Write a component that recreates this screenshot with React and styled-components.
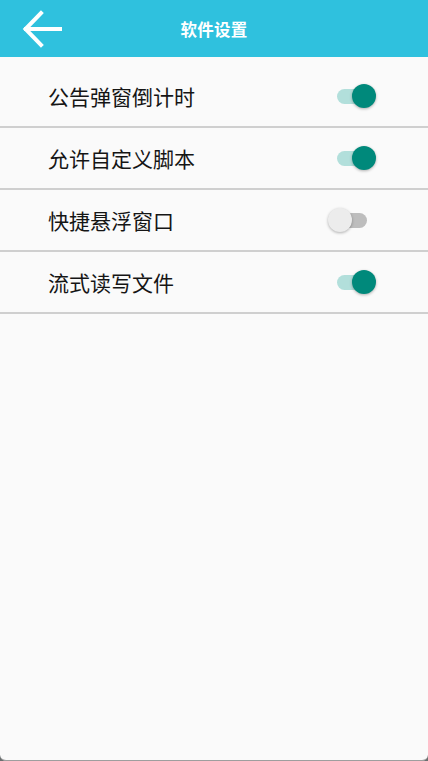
import { useState } from "react";
import styled, { createGlobalStyle } from "styled-components";

const GlobalStyle = createGlobalStyle`
  html, body {
    margin: 0;
    padding: 0;
    background: #6b6f70;
  }
  body {
    font-family: Roboto, "Noto Sans CJK SC", sans-serif;
  }
`;

const settingsList = [
  { key: "notice", label: "公告弹窗倒计时", on: true },
  { key: "script", label: "允许自定义脚本", on: true },
  { key: "float", label: "快捷悬浮窗口", on: false },
  { key: "stream", label: "流式读写文件", on: true },
];

const Switch = ({ checked, onToggle }) => (
  <SwitchWrapper checked={checked} onClick={onToggle}>
    <div className="track" />
    <div className="thumb" />
  </SwitchWrapper>
);

const App = () => {
  const [settings, setSettings] = useState(settingsList);

  const toggle = (key) => {
    setSettings(
      settings.map((item) =>
        item.key === key ? { ...item, on: !item.on } : item
      )
    );
  };

  return (
    <>
      <GlobalStyle />
      <Screen>
        <Header>
          <BackButton>
            <svg width="40" height="38" viewBox="0 0 40 38" fill="none">
              <path
                d="M38 19H4M19 3L3.5 19L19 35"
                stroke="#ffffff"
                strokeWidth="4"
                strokeLinecap="square"
              />
            </svg>
          </BackButton>
          <Title>软件设置</Title>
        </Header>
        <List>
          {settings.map((item) => (
            <Row key={item.key}>
              <Label>{item.label}</Label>
              <Switch checked={item.on} onToggle={() => toggle(item.key)} />
            </Row>
          ))}
        </List>
      </Screen>
    </>
  );
};
export default App;

const Screen = styled.div`
  width: 428px;
  height: 760px;
  background: #fafafa;
  border-bottom: 1px solid #9e9e9e;
  border-radius: 0 0 6px 6px;
  overflow: hidden;
  display: flex;
  flex-direction: column;
`;

const Header = styled.div`
  position: relative;
  height: 57px;
  background: #2fc1de;
  display: flex;
  align-items: center;
  justify-content: center;
  flex-shrink: 0;
`;

const BackButton = styled.div`
  position: absolute;
  left: 22px;
  top: 10px;
  width: 40px;
  height: 38px;
  cursor: pointer;

  svg {
    display: block;
  }
`;

const Title = styled.div`
  color: #ffffff;
  font-size: 16.5px;
  font-weight: bold;
  letter-spacing: 0.2px;
`;

const List = styled.div`
  padding-top: 9px;
  display: flex;
  flex-direction: column;
`;

const Row = styled.div`
  height: 60px;
  border-bottom: 2px solid #cfcfcf;
  display: flex;
  align-items: center;
  justify-content: space-between;
  padding: 0 52px 0 48px;
`;

const Label = styled.div`
  font-size: 21px;
  color: #151515;
  font-family: "Noto Sans CJK SC", sans-serif;
`;

const SwitchWrapper = styled.div`
  position: relative;
  width: 48px;
  height: 24px;
  cursor: pointer;

  .track {
    position: absolute;
    left: 9px;
    top: 5px;
    width: 30px;
    height: 15px;
    border-radius: 8px;
    background: ${(p) => (p.checked ? "#b2dfdb" : "#bdbdbd")};
  }

  .thumb {
    position: absolute;
    top: 0;
    left: ${(p) => (p.checked ? "24px" : "0")};
    width: 24px;
    height: 24px;
    border-radius: 50%;
    background: ${(p) => (p.checked ? "#00897b" : "#ececec")};
    box-shadow: 0 1px 3px rgba(0, 0, 0, 0.3);
  }
`;
